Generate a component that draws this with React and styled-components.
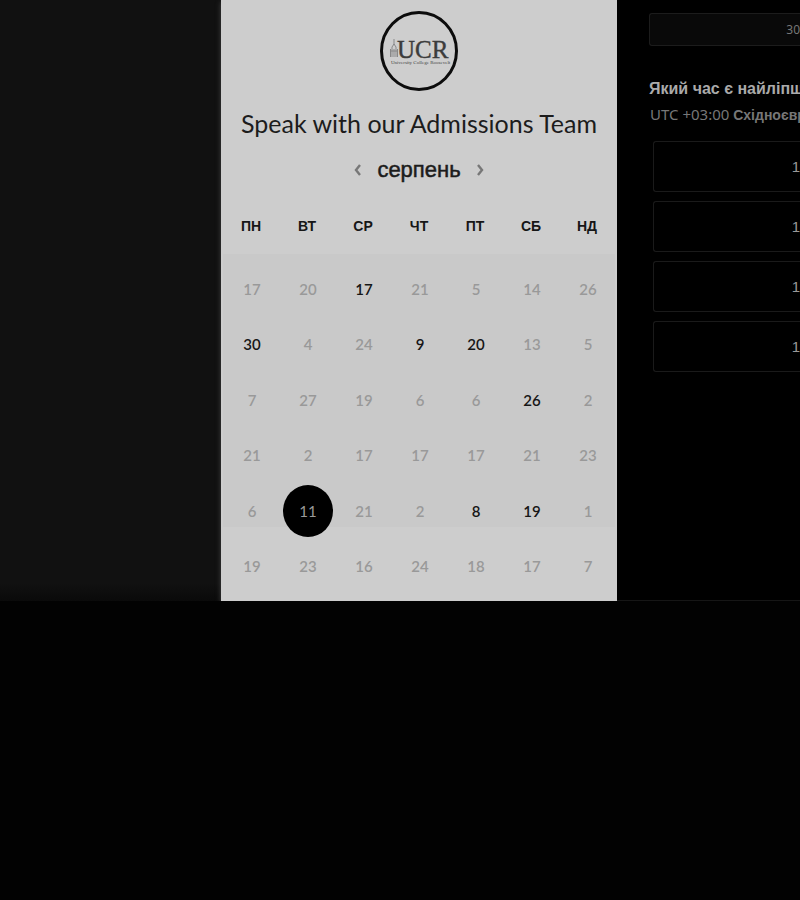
import React from "react";
import styled, { createGlobalStyle } from "styled-components";

const GlobalStyle = createGlobalStyle`
  *, *::before, *::after { box-sizing: border-box; }
  body {
    margin: 0;
    background: #020202;
    font-family: Lato, "Liberation Sans", sans-serif;
    overflow-x: hidden;
  }
  button { font: inherit; color: inherit; padding: 0; cursor: pointer; }
`;

const Page = styled.main`
  display: grid;
  grid-template-columns: minmax(0, 221fr) 396px minmax(0, 183fr);
  min-height: 601px;
`;

const Backdrop = styled.div`
  background: linear-gradient(to bottom, #111 97%, #0a0a0a);
`;

const Card = styled.section`
  display: flex;
  flex-direction: column;
  align-items: center;
  padding-top: 11px;
  background: #cdcdcd;
  box-shadow: 0 2px 5px #444;
`;

const Logo = styled.svg`
  display: block;
  width: 78px;
  height: 80px;
`;

const Title = styled.h1`
  margin: 16px 0 0;
  color: #1c1c1c;
  font-size: 25px;
  font-weight: 400;
  line-height: 32px;
  white-space: nowrap;
`;

const MonthNav = styled.nav`
  display: flex;
  align-items: center;
  gap: 14px;
  height: 32px;
  margin-top: 15px;
`;

const Month = styled.h2`
  margin: 0;
  color: #1c1c1c;
  font: 400 22px/32px "Liberation Sans", sans-serif;
  -webkit-text-stroke: 0.5px #1c1c1c;
`;

const Arrow = styled.button`
  display: flex;
  border: 0;
  background: none;
  color: #777;
`;

const Calendar = styled.table`
  width: 392px;
  height: 389px;
  margin-top: 19px;
  table-layout: fixed;
  border-collapse: collapse;
  background: linear-gradient(to bottom, transparent 49px, #c9c9c9 49px, #c9c9c9 322px, transparent 322px);
`;

const Weekday = styled.th`
  height: 56px;
  padding: 0 0 14px;
  color: #161616;
  font: 700 14px/16px "Liberation Sans", sans-serif;
`;

const DayCell = styled.td`
  padding: 0 0 0 2px;
  text-align: center;
`;

const Day = styled.button`
  width: 50px;
  height: 52px;
  border: 0;
  border-radius: 50%;
  background: ${(p) => (p.$selected ? "#000" : "none")};
  color: ${(p) => (p.$selected ? "#999" : p.$open ? "#161616" : "#999")};
  font-size: 15px;
  font-weight: ${(p) => (p.$selected ? 400 : 600)};
  line-height: 20px;
`;

const Panel = styled.section`
  display: flex;
  flex-direction: column;
  padding: 13px 0 0 32px;
  overflow: hidden;
  background: #000;
  border-bottom: 1px solid #161616;
`;

const Duration = styled.button`
  height: 33px;
  border: 1px solid #1c1c1c;
  border-right: 0;
  border-radius: 3px 0 0 3px;
  background: #090909;
  color: #777;
  font: 400 12px/16px "Noto Sans", sans-serif;
  text-align: right;
`;

const Question = styled.h3`
  margin: 32px 0 0;
  color: #aaa;
  font: 700 16px/22px "Liberation Sans", sans-serif;
  white-space: nowrap;
`;

const Zone = styled.p`
  margin: 4px 0 0 1px;
  color: #777;
  font: 400 15px/20px "Noto Sans", sans-serif;
  white-space: nowrap;

  b { font: 700 14px/20px "Liberation Sans", sans-serif; }
`;

const Slots = styled.div`
  display: grid;
  gap: 9px;
  margin: 16px 0 0 4px;
`;

const Slot = styled.button`
  height: 51px;
  border: 1px solid #1a1a1a;
  border-right: 0;
  border-radius: 3px 0 0 3px;
  background: #000;
  color: #999;
  font: 400 15px/20px "Liberation Sans", sans-serif;
  text-align: right;
`;

const weekdays = ["ПН", "ВТ", "СР", "ЧТ", "ПТ", "СБ", "НД"];

const weeks = [
  [17, 20, 17, 21, 5, 14, 26],
  [30, 4, 24, 9, 20, 13, 5],
  [7, 27, 19, 6, 6, 26, 2],
  [21, 2, 17, 17, 17, 21, 23],
  [6, 11, 21, 2, 8, 19, 1],
  [19, 23, 16, 24, 18, 17, 7],
];

const openDays = new Set(["0-2", "1-0", "1-3", "1-4", "2-5", "4-4", "4-5"]);
const selectedDay = "4-1";
const slots = ["first", "second", "third", "fourth"];

function CollegeLogo() {
  return (
    <Logo viewBox="0 0 78 80" role="img" aria-label="UCR">
      <ellipse cx="39" cy="40" rx="37.5" ry="38.5" fill="#cecece" stroke="#0c0c0c" strokeWidth="3" />
      <g stroke="#888" fill="none" strokeWidth="1">
        <path d="M14 28v6M12 46V36l2-3 2 3v10M10.5 46v-8M17.5 46v-8M14 38v8M10 40h8" />
      </g>
      <text x="17" y="47" fill="#3c3c3c" stroke="#3c3c3c" strokeWidth="0.4" fontFamily="Liberation Serif, serif" fontSize="25">
        UCR
      </text>
      <text x="11" y="53" fill="#444" fontFamily="Liberation Serif, serif" fontSize="5">
        University College Roosevelt
      </text>
    </Logo>
  );
}

function Chevron({ d }) {
  return (
    <svg width="10" height="14" viewBox="0 0 10 14" fill="none" stroke="currentColor" strokeWidth="2.4" aria-hidden="true">
      <path d={d} />
    </svg>
  );
}

export default function App() {
  return (
    <>
      <GlobalStyle />
      <Page>
        <Backdrop />
        <Card>
          <CollegeLogo />
          <Title>Speak with our Admissions Team</Title>
          <MonthNav>
            <Arrow aria-label="Попередній місяць"><Chevron d="M7 2 3 7l4 5" /></Arrow>
            <Month>серпень</Month>
            <Arrow aria-label="Наступний місяць"><Chevron d="m3 2 4 5-4 5" /></Arrow>
          </MonthNav>
          <Calendar>
            <thead>
              <tr>{weekdays.map((name) => <Weekday key={name} scope="col">{name}</Weekday>)}</tr>
            </thead>
            <tbody>
              {weeks.map((week, row) => (
                <tr key={row}>
                  {week.map((day, column) => {
                    const id = `${row}-${column}`;
                    return (
                      <DayCell key={id}>
                        <Day $open={openDays.has(id)} $selected={id === selectedDay}>{day}</Day>
                      </DayCell>
                    );
                  })}
                </tr>
              ))}
            </tbody>
          </Calendar>
        </Card>
        <Panel>
          <Duration>30</Duration>
          <Question>Який час є найліпш</Question>
          <Zone>UTC +03:00 <b>Східноєвр</b></Zone>
          <Slots>
            {slots.map((slot) => <Slot key={slot}>1</Slot>)}
          </Slots>
        </Panel>
      </Page>
    </>
  );
}
